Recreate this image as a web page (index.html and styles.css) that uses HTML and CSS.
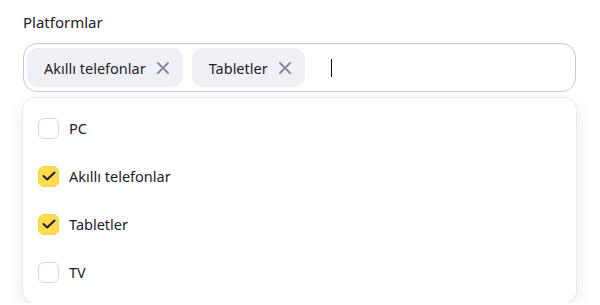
FILE: index.html
```html
<!DOCTYPE html>
<html lang="tr">
<head>
<meta charset="utf-8">
<link rel="stylesheet" href="styles.css">
</head>
<body>
<div class="field">
  <div class="label">Platformlar</div>
  <div class="input">
    <span class="chip">Akıllı telefonlar
      <svg class="x" width="12" height="12" viewBox="0 0 12 12"><path d="M1 1L11 11M11 1L1 11" stroke="#858a99" stroke-width="1.8" stroke-linecap="round"/></svg>
    </span>
    <span class="chip">Tabletler
      <svg class="x" width="12" height="12" viewBox="0 0 12 12"><path d="M1 1L11 11M11 1L1 11" stroke="#858a99" stroke-width="1.8" stroke-linecap="round"/></svg>
    </span>
    <span class="caret"></span>
  </div>
  <div class="menu">
    <div class="option"><span class="box"></span>PC</div>
    <div class="option"><span class="box on"><svg width="14" height="10" viewBox="0 0 14 10"><path d="M1.5 5L5.2 8.5L12.5 1.5" fill="none" stroke="#1f2233" stroke-width="2.1" stroke-linecap="round" stroke-linejoin="round"/></svg></span>Akıllı telefonlar</div>
    <div class="option"><span class="box on"><svg width="14" height="10" viewBox="0 0 14 10"><path d="M1.5 5L5.2 8.5L12.5 1.5" fill="none" stroke="#1f2233" stroke-width="2.1" stroke-linecap="round" stroke-linejoin="round"/></svg></span>Tabletler</div>
    <div class="option"><span class="box"></span>TV</div>
  </div>
</div>
</body>
</html>
```
FILE: styles.css
```css
html, body { margin: 0; padding: 0; background: #fff; }
body {
  font-family: "Noto Sans", "Liberation Sans", sans-serif;
  color: #1e2029;
  padding: 12px 24px 0 23px;
}
.field { width: 553px; }
.label { font-size: 15px; line-height: 20px; height: 31px; }
.input {
  box-sizing: border-box;
  height: 49px;
  border: 1px solid #c7cad3;
  border-radius: 14px;
  padding: 4px 3px;
  display: flex;
  align-items: center;
  gap: 9px;
}
.chip {
  height: 39px;
  box-sizing: border-box;
  background: #eef0f5;
  border-radius: 11px;
  padding: 0 14px 0 17px;
  display: flex;
  align-items: center;
  gap: 11px;
  font-size: 14.5px;
}
.x { display: block; }
.caret {
  width: 1.5px; height: 18px; background: #111;
  margin-left: 17px;
}
.menu {
  margin-top: 6px;
  height: 205px;
  border-radius: 12px;
  background: #fff;
  box-shadow: 0 0 0 1px rgba(220,222,235,0.5), 0 4px 16px rgba(140,145,180,0.18);
  padding: 6px 15px;
  box-sizing: border-box;
}
.option {
  height: 48px;
  display: flex;
  align-items: center;
  font-size: 14.5px;
  gap: 10px;
}
.box {
  width: 21px; height: 21px;
  box-sizing: border-box;
  border: 1px solid #d6d9e2;
  border-radius: 6px;
  display: flex; align-items: center; justify-content: center;
}
.box.on { background: #ffdb4d; border-color: #f5cf45; }
```
